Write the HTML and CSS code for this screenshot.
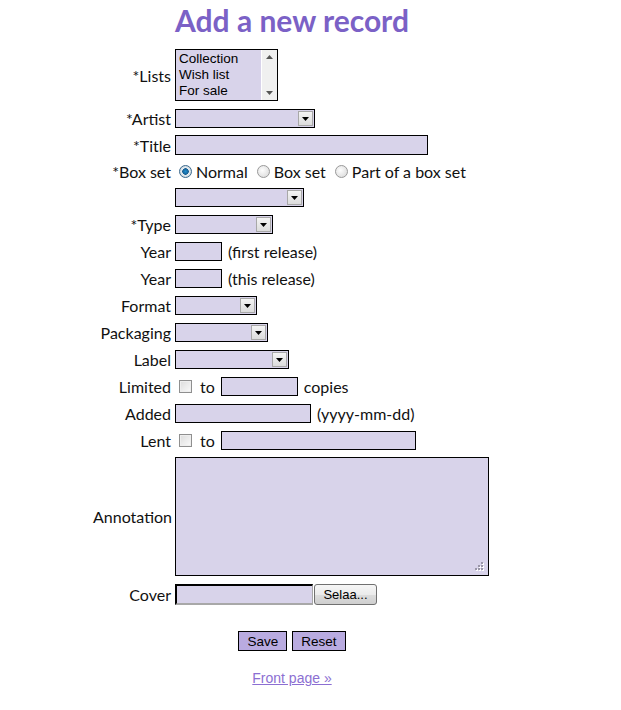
FILE: index.html
```html
<!DOCTYPE html>
<html>
<head>
<meta charset="utf-8">
<title>Add a new record</title>
<link rel="stylesheet" href="styles.css">
</head>
<body>
<div class="page">
  <h1 class="heading">Add a new record</h1>
  <form class="record-form">
    <table class="form-table">
      <colgroup><col class="col-label"><col class="col-field"></colgroup>
      <tr>
        <td class="label">*Lists</td>
        <td class="field"><div class="cell">
          <span class="listbox">
            <select class="list-select" multiple size="3">
              <option>Collection</option>
              <option>Wish list</option>
              <option>For sale</option>
            </select>
            <span class="scrollbar">
              <svg width="7" height="4" viewBox="0 0 7 4"><path d="M0 4 L3.5 0 L7 4Z" fill="#555"/></svg>
              <svg width="7" height="4" viewBox="0 0 7 4"><path d="M0 0 L7 0 L3.5 4Z" fill="#555"/></svg>
            </span>
          </span>
        </div></td>
      </tr>
      <tr class="tight">
        <td class="label">*Artist</td>
        <td class="field"><div class="cell"><span class="dropdown w-artist"><select class="drop-select"></select><span class="drop-btn"><svg width="7" height="4" viewBox="0 0 7 4"><path d="M0 0 L7 0 L3.5 4Z" fill="#000"/></svg></span></span></div></td>
      </tr>
      <tr class="tight">
        <td class="label">*Title</td>
        <td class="field"><div class="cell"><input class="text w-title" type="text"></div></td>
      </tr>
      <tr class="tight">
        <td class="label">*Box set</td>
        <td class="field"><div class="cell">
          <label class="opt"><span class="radio checked"></span>Normal</label>
          <label class="opt"><span class="radio"></span>Box set</label>
          <label class="opt"><span class="radio"></span>Part of a box set</label>
        </div></td>
      </tr>
      <tr>
        <td class="label"></td>
        <td class="field"><div class="cell"><span class="dropdown w-boxset"><select class="drop-select"></select><span class="drop-btn"><svg width="7" height="4" viewBox="0 0 7 4"><path d="M0 0 L7 0 L3.5 4Z" fill="#000"/></svg></span></span></div></td>
      </tr>
      <tr>
        <td class="label">*Type</td>
        <td class="field"><div class="cell"><span class="dropdown w-type"><select class="drop-select"></select><span class="drop-btn"><svg width="7" height="4" viewBox="0 0 7 4"><path d="M0 0 L7 0 L3.5 4Z" fill="#000"/></svg></span></span></div></td>
      </tr>
      <tr>
        <td class="label">Year</td>
        <td class="field"><div class="cell"><input class="text w-year" type="text"><span class="note">(first release)</span></div></td>
      </tr>
      <tr>
        <td class="label">Year</td>
        <td class="field"><div class="cell"><input class="text w-year" type="text"><span class="note">(this release)</span></div></td>
      </tr>
      <tr>
        <td class="label">Format</td>
        <td class="field"><div class="cell"><span class="dropdown w-format"><select class="drop-select"></select><span class="drop-btn"><svg width="7" height="4" viewBox="0 0 7 4"><path d="M0 0 L7 0 L3.5 4Z" fill="#000"/></svg></span></span></div></td>
      </tr>
      <tr>
        <td class="label">Packaging</td>
        <td class="field"><div class="cell"><span class="dropdown w-packaging"><select class="drop-select"></select><span class="drop-btn"><svg width="7" height="4" viewBox="0 0 7 4"><path d="M0 0 L7 0 L3.5 4Z" fill="#000"/></svg></span></span></div></td>
      </tr>
      <tr>
        <td class="label">Label</td>
        <td class="field"><div class="cell"><span class="dropdown w-label"><select class="drop-select"></select><span class="drop-btn"><svg width="7" height="4" viewBox="0 0 7 4"><path d="M0 0 L7 0 L3.5 4Z" fill="#000"/></svg></span></span></div></td>
      </tr>
      <tr>
        <td class="label">Limited</td>
        <td class="field"><div class="cell"><span class="check"></span><span class="to">to</span><input class="text w-copies" type="text"><span class="note">copies</span></div></td>
      </tr>
      <tr>
        <td class="label">Added</td>
        <td class="field"><div class="cell"><input class="text w-added" type="text"><span class="note">(yyyy-mm-dd)</span></div></td>
      </tr>
      <tr class="tight">
        <td class="label">Lent</td>
        <td class="field"><div class="cell"><span class="check"></span><span class="to">to</span><input class="text w-lent" type="text"></div></td>
      </tr>
      <tr class="tight">
        <td class="label">Annotation</td>
        <td class="field"><div class="cell">
          <span class="textarea-wrap">
            <textarea class="annotation"></textarea>
            <svg class="grip" width="10" height="10" viewBox="0 0 10 10"><g fill="#fff"><rect x="7" y="1" width="2" height="2"/><rect x="4" y="4" width="2" height="2"/><rect x="7" y="4" width="2" height="2"/><rect x="1" y="7" width="2" height="2"/><rect x="4" y="7" width="2" height="2"/><rect x="7" y="7" width="2" height="2"/></g><g fill="#9a96a8"><rect x="6" y="0" width="2" height="2"/><rect x="3" y="3" width="2" height="2"/><rect x="6" y="3" width="2" height="2"/><rect x="0" y="6" width="2" height="2"/><rect x="3" y="6" width="2" height="2"/><rect x="6" y="6" width="2" height="2"/></g></svg>
          </span>
        </div></td>
      </tr>
      <tr class="cover-row">
        <td class="label">Cover</td>
        <td class="field"><div class="cell"><span class="file-box"></span><button type="button" class="browse">Selaa...</button></div></td>
      </tr>
    </table>
    <div class="actions">
      <button type="button" class="action">Save</button>
      <button type="reset" class="action">Reset</button>
    </div>
  </form>
  <p class="back"><a href="#" class="back-link">Front page »</a></p>
</div>
</body>
</html>
```

FILE: styles.css
```css
html, body {
  margin: 0;
  padding: 0;
  background: #fff;
}
body {
  font-family: "Lato", "Open Sans", "DejaVu Sans", sans-serif;
  font-size: 16px;
  color: #111;
}
.page {
  width: 584px;
  display: flex;
  flex-direction: column;
  align-items: center;
}
.heading {
  margin: 3px 0 0 0;
  height: 42px;
  line-height: 34px;
  font-size: 30px;
  font-weight: bold;
  color: #7b61c6;
}
.record-form {
  display: flex;
  flex-direction: column;
  align-items: center;
}
.form-table {
  border-collapse: collapse;
  border-spacing: 0;
  width: 398px;
  table-layout: fixed;
}
.col-label { width: 80px; }
.col-field { width: 318px; }
.form-table td {
  padding: 4px 0;
  line-height: 19px;
  vertical-align: middle;
  white-space: nowrap;
}
.form-table tr.tight td { padding-bottom: 3px; }
.form-table tr.cover-row td { padding-top: 5px; padding-bottom: 4px; }
.form-table td.label {
  text-align: right;
  padding-right: 2px;
}
.form-table td.field {
  padding-left: 2px;
}
.cell {
  display: flex;
  align-items: center;
  min-height: 19px;
}
.text {
  box-sizing: border-box;
  height: 19px;
  border: 1px solid #000;
  background: #d8d3ea;
  margin: 0;
  padding: 0 2px;
  font-family: "Liberation Sans", Arial, sans-serif;
  font-size: 13px;
  outline: none;
}
.w-title { width: 253px; height: 20px; }
.w-year { width: 47px; }
.w-copies { width: 77px; }
.w-added { width: 136px; }
.w-lent { width: 195px; }
.note { margin-left: 6px; }
.to { margin: 0 6px 0 8px; }
.check {
  box-sizing: border-box;
  width: 13px;
  height: 13px;
  margin-left: 4px;
  border: 1px solid #8f8f8f;
  background: linear-gradient(135deg, #dcdcdc, #fafafa);
  box-shadow: inset 0 0 0 1px #eee;
}
.listbox {
  box-sizing: border-box;
  display: inline-flex;
  width: 103px;
  height: 52px;
  border: 1px solid #000;
  background: #d8d3ea;
}
.list-select {
  appearance: none;
  -webkit-appearance: none;
  flex: 1;
  min-width: 0;
  border: none;
  background: transparent;
  margin: 0;
  padding: 1px 0 0 3px;
  font-family: "Liberation Sans", Arial, sans-serif;
  font-size: 13.5px;
  overflow: hidden;
  color: #000;
  outline: none;
}
.list-select option {
  padding: 0;
  min-height: 16px;
  line-height: 16px;
}
.scrollbar {
  width: 16px;
  background: #f0f0f0;
  border-left: 1px solid #fff;
  display: flex;
  flex-direction: column;
  justify-content: space-between;
  align-items: center;
  padding: 5px 0 5px;
  box-sizing: border-box;
}
.dropdown {
  box-sizing: border-box;
  display: inline-flex;
  height: 19px;
  border: 1px solid #000;
  background: #d8d3ea;
  padding: 1px;
}
.drop-select {
  appearance: none;
  -webkit-appearance: none;
  flex: 1;
  min-width: 0;
  border: none;
  background: transparent;
  margin: 0;
  padding: 0;
  outline: none;
}
.drop-btn {
  box-sizing: border-box;
  width: 15px;
  height: 15px;
  border: 1px solid #a8a8a8;
  background: linear-gradient(#f4f4f4, #dcdcdc);
  display: flex;
  align-items: center;
  justify-content: center;
  padding-top: 1px;
}
.w-artist { width: 140px; }
.w-boxset { width: 129px; }
.w-type { width: 98px; }
.w-format { width: 82px; }
.w-packaging { width: 93px; }
.w-label { width: 114px; }
.opt {
  display: inline-flex;
  align-items: center;
  margin-right: 5px;
}
.radio {
  box-sizing: border-box;
  width: 13px;
  height: 13px;
  border-radius: 50%;
  border: 1px solid #9a9a9a;
  background: radial-gradient(circle at 40% 40%, #fdfdfd, #d6d6d6);
  margin: 0 4px 0 4px;
}
.radio.checked {
  border-color: #3d6b8f;
  background: radial-gradient(circle at 50% 50%, #1e8fd0 0, #1a5f93 3px, #e8eef2 3.5px, #c9d4dc 6px);
}
.textarea-wrap {
  position: relative;
  display: block;
  height: 119px;
}
.annotation {
  box-sizing: border-box;
  width: 314px;
  height: 119px;
  border: 1px solid #000;
  background: #d8d3ea;
  resize: none;
  margin: 0;
  padding: 2px;
  display: block;
  outline: none;
}
.grip {
  position: absolute;
  right: 4px;
  bottom: 4px;
}
.file-box {
  box-sizing: border-box;
  width: 138px;
  height: 21px;
  background: #d8d3ea;
  border-top: 2px solid #000;
  border-left: 2px solid #000;
  border-right: 1px solid #a8a8a8;
  border-bottom: 2px solid #a8a8a8;
}
.browse {
  box-sizing: border-box;
  height: 21px;
  width: 63px;
  margin-left: 1px;
  border: 1px solid #707070;
  border-radius: 3px;
  background: linear-gradient(#f6f6f6 0%, #ebebeb 50%, #dddddd 51%, #cfcfcf 100%);
  font-family: "Liberation Sans", Arial, sans-serif;
  font-size: 13px;
  color: #000;
  padding: 0;
}
.actions {
  display: flex;
  gap: 5px;
  margin-top: 22px;
}
.action {
  box-sizing: border-box;
  height: 20px;
  border: 1px solid #000;
  background: #b9abe0;
  font-family: "Liberation Sans", Arial, sans-serif;
  font-size: 13.5px;
  color: #000;
  padding: 0 8px;
  margin: 0;
}
.back {
  margin: 19px 0 0 0;
  font-family: "Liberation Sans", Arial, sans-serif;
  font-size: 14px;
}
.back-link {
  color: #8c6fd2;
  text-decoration: underline;
}
```
